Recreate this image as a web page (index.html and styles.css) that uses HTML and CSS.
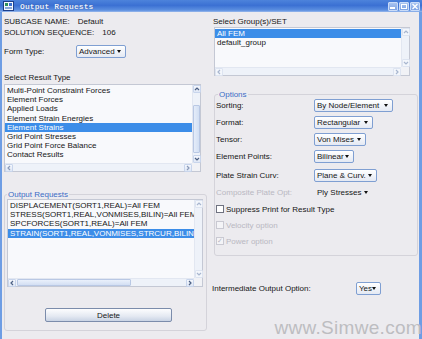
FILE: index.html
```html
<!DOCTYPE html>
<html lang="en">
<head>
  <meta charset="UTF-8">
  <title>Output Requests</title>
  <link rel="stylesheet" href="styles.css">
</head>
<body>
  <div class="window">
    <div class="titlebar">
      <svg class="app-icon" width="11" height="10" viewBox="0 0 11 10">
        <rect x="0.5" y="0.5" width="10" height="9" fill="#f4f8ff" stroke="#1d3f8a"/>
        <rect x="2" y="2" width="3" height="3" fill="#2f8f5a"/>
        <rect x="6" y="2" width="3" height="3" fill="#3a6fd0"/>
        <rect x="2" y="6" width="7" height="2" fill="#8aa8d8"/>
      </svg>
      <span class="title">Output Requests</span>
      <div class="wbtns">
        <span class="wbtn"><svg width="10" height="9" viewBox="0 0 10 9"><rect x="2" y="5" width="5" height="2" fill="#fff"/></svg></span>
        <span class="wbtn"><svg width="10" height="9" viewBox="0 0 10 9"><rect x="2.5" y="2.5" width="5" height="4" fill="none" stroke="#fff"/></svg></span>
        <span class="wbtn"><svg width="10" height="9" viewBox="0 0 10 9"><path d="M2.5 2 L7.5 7 M7.5 2 L2.5 7" stroke="#fff" stroke-width="1.3"/></svg></span>
      </div>
    </div>

    <div class="content">
      <div class="col-left">
        <div class="info"><span>SUBCASE NAME:</span><span class="val">Default</span></div>
        <div class="info"><span>SOLUTION SEQUENCE:</span><span class="val">106</span></div>
        <div class="form-row">
          <span class="form-label">Form Type:</span>
          <span class="select w-adv">Advanced<i class="arrow"></i></span>
        </div>
        <div class="caption">Select Result Type</div>

        <div class="listbox result-list">
          <div class="items">
            <div class="item">Multi-Point Constraint Forces</div>
            <div class="item">Element Forces</div>
            <div class="item">Applied Loads</div>
            <div class="item">Element Strain Energies</div>
            <div class="item selected">Element Strains</div>
            <div class="item">Grid Point Stresses</div>
            <div class="item">Grid Point Force Balance</div>
            <div class="item">Contact Results</div>
          </div>
          <div class="vscroll">
            <span class="sbtn"><svg width="6" height="6" viewBox="0 0 6 6"><path d="M1 4 L3 2 L5 4" fill="none" stroke="#4d6185" stroke-width="1.2"/></svg></span>
            <span class="vtrack"><span class="vthumb"></span></span>
            <span class="sbtn"><svg width="6" height="6" viewBox="0 0 6 6"><path d="M1 2 L3 4 L5 2" fill="none" stroke="#4d6185" stroke-width="1.2"/></svg></span>
          </div>
          <div class="hscroll">
            <span class="sbtn"><svg width="6" height="6" viewBox="0 0 6 6"><path d="M4 1 L2 3 L4 5" fill="none" stroke="#8a9ab8" stroke-width="1.2"/></svg></span>
            <span class="htrack"></span>
            <span class="sbtn"><svg width="6" height="6" viewBox="0 0 6 6"><path d="M2 1 L4 3 L2 5" fill="none" stroke="#8a9ab8" stroke-width="1.2"/></svg></span>
          </div>
          <div class="corner"></div>
        </div>

        <fieldset class="group output-group">
          <legend>Output Requests</legend>
          <div class="listbox output-list">
            <div class="items">
              <div class="item">DISPLACEMENT(SORT1,REAL)=All FEM</div>
              <div class="item">STRESS(SORT1,REAL,VONMISES,BILIN)=All FEM</div>
              <div class="item">SPCFORCES(SORT1,REAL)=All FEM</div>
              <div class="item selected">STRAIN(SORT1,REAL,VONMISES,STRCUR,BILIN)=All FEM</div>
            </div>
            <div class="vscroll">
              <span class="sbtn faint"><svg width="6" height="6" viewBox="0 0 6 6"><path d="M1 4 L3 2 L5 4" fill="none" stroke="#a8b6cf" stroke-width="1.2"/></svg></span>
              <span class="vtrack"></span>
              <span class="sbtn faint"><svg width="6" height="6" viewBox="0 0 6 6"><path d="M1 2 L3 4 L5 2" fill="none" stroke="#a8b6cf" stroke-width="1.2"/></svg></span>
            </div>
            <div class="hscroll">
              <span class="sbtn"><svg width="6" height="6" viewBox="0 0 6 6"><path d="M4 1 L2 3 L4 5" fill="none" stroke="#4d6185" stroke-width="1.2"/></svg></span>
              <span class="htrack"><span class="hthumb"></span></span>
              <span class="sbtn"><svg width="6" height="6" viewBox="0 0 6 6"><path d="M2 1 L4 3 L2 5" fill="none" stroke="#4d6185" stroke-width="1.2"/></svg></span>
            </div>
            <div class="corner"></div>
          </div>
          <button class="delete-btn">Delete</button>
        </fieldset>
      </div>

      <div class="col-right">
        <div class="caption top">Select Group(s)/SET</div>
        <div class="listbox group-list">
          <div class="items">
            <div class="item selected">All FEM</div>
            <div class="item">default_group</div>
          </div>
          <div class="vscroll">
            <span class="sbtn faint"><svg width="6" height="6" viewBox="0 0 6 6"><path d="M1 4 L3 2 L5 4" fill="none" stroke="#a8b6cf" stroke-width="1.2"/></svg></span>
            <span class="vtrack"></span>
            <span class="sbtn faint"><svg width="6" height="6" viewBox="0 0 6 6"><path d="M1 2 L3 4 L5 2" fill="none" stroke="#a8b6cf" stroke-width="1.2"/></svg></span>
          </div>
          <div class="hscroll">
            <span class="sbtn faint"><svg width="6" height="6" viewBox="0 0 6 6"><path d="M4 1 L2 3 L4 5" fill="none" stroke="#a8b6cf" stroke-width="1.2"/></svg></span>
            <span class="htrack"></span>
            <span class="sbtn faint"><svg width="6" height="6" viewBox="0 0 6 6"><path d="M2 1 L4 3 L2 5" fill="none" stroke="#a8b6cf" stroke-width="1.2"/></svg></span>
          </div>
          <div class="corner"></div>
        </div>

        <fieldset class="group options-group">
          <legend>Options</legend>
          <div class="opt-row first"><span class="opt-label">Sorting:</span><span class="select w-sort">By Node/Element<i class="arrow"></i></span></div>
          <div class="opt-row"><span class="opt-label">Format:</span><span class="select w-format">Rectangular<i class="arrow"></i></span></div>
          <div class="opt-row"><span class="opt-label">Tensor:</span><span class="select w-tensor">Von Mises<i class="arrow"></i></span></div>
          <div class="opt-row"><span class="opt-label">Element Points:</span><span class="select w-points">Bilinear<i class="arrow"></i></span></div>
          <div class="opt-row plate"><span class="opt-label">Plate Strain Curv:</span><span class="select w-plate">Plane &amp; Curv.<i class="arrow"></i></span></div>
          <div class="opt-row"><span class="opt-label disabled">Composite Plate Opt:</span><span class="select flat w-comp">Ply Stresses<i class="arrow"></i></span></div>
          <div class="check-row"><span class="box"></span>Suppress Print for Result Type</div>
          <div class="check-row disabled"><span class="box"></span>Velocity option</div>
          <div class="check-row disabled"><span class="box checked">&#10003;</span>Power option</div>
        </fieldset>

        <div class="inter-row">
          <span class="inter-label">Intermediate Output Option:</span>
          <span class="select w-yes">Yes<i class="arrow"></i></span>
        </div>
      </div>
    </div>

    <div class="watermark">www.Simwe.com</div>
  </div>
</body>
</html>
```

FILE: styles.css
```css
body { margin: 0; font-family: "Liberation Sans", Arial, sans-serif; font-size: 8px; color: #161616; }
.window { width: 422px; height: 339px; position: relative; overflow: hidden; display: flex; flex-direction: column; background: #ecebef; }

/* title bar */
.titlebar { height: 12px; display: flex; align-items: center; background: linear-gradient(#4d83db, #3b70d3 45%, #5d90e0 85%, #9ab9ec); }
.app-icon { margin-left: 3px; }
.title { margin-left: 6px; font-family: "Liberation Mono", monospace; font-size: 8px; font-weight: bold; color: #e4eeff; letter-spacing: 0.1px; text-shadow: 0 0 1px #1c3f8f; }
.wbtns { margin-left: auto; margin-right: 2px; display: flex; gap: 1px; }
.wbtn { width: 10px; height: 9px; display: flex; background: linear-gradient(#a9c4f0, #7ea3e3); border: 1px solid #c9dbf8; border-radius: 1px; box-sizing: border-box; }
.wbtn svg { margin: -1px; }

/* main area */
.content { flex: 1; display: flex; border-left: 2px solid #6e9de4; border-right: 3px solid #6e9de4; }
.col-left { width: 203px; padding-left: 2px; }
.col-right { flex: 1; margin-left: 6px; }

.info { height: 11px; line-height: 11px; }
.info:first-child { margin-top: 4px; }
.info .val { margin-left: 8px; }
.form-row { margin-top: 7px; height: 13px; display: flex; align-items: center; }
.form-label { width: 72px; }
.caption { margin-top: 14px; height: 11px; line-height: 11px; }
.caption.top { margin-top: 4px; }

/* dropdowns */
.select { height: 13px; box-sizing: border-box; display: inline-flex; align-items: center; padding-left: 2px; border: 1px solid #7f9fd2; border-radius: 2px; background: linear-gradient(#ffffff, #e4e9f3); position: relative; white-space: nowrap; }
.select .arrow { position: absolute; right: 4px; top: 4px; width: 0; height: 0; border-left: 2.5px solid transparent; border-right: 2.5px solid transparent; border-top: 3px solid #111; }
.select.flat { border-color: transparent; background: none; }
.w-adv { width: 50px; }
.w-sort { width: 79px; }
.w-format { width: 59px; }
.w-tensor { width: 52px; }
.w-points { width: 40px; }
.w-plate { width: 63px; }
.w-comp { width: 59px; }
.w-yes { width: 25px; }

/* list boxes */
.listbox { box-sizing: border-box; border: 1px solid #c4c8d4; background: #f8f9fc; display: grid; grid-template-columns: 1fr 8px; grid-template-rows: 1fr 8px; }
.items { overflow: hidden; padding-top: 1px; }
.item { height: 9.2px; line-height: 9.2px; padding-left: 2px; white-space: nowrap; }
.item.selected { background: #3c8de8; color: #fff; }
.vscroll { display: flex; flex-direction: column; background: #eef2f9; border-left: 1px solid #e2e7f1; }
.hscroll { display: flex; background: #eef2f9; border-top: 1px solid #e2e7f1; }
.corner { background: #f1f2f6; }
.sbtn { width: 8px; height: 8px; flex: none; display: flex; align-items: center; justify-content: center; box-sizing: border-box; border: 1px solid #c8d5ec; background: linear-gradient(#f4f7fd, #dfe7f5); border-radius: 1px; }
.sbtn.faint { border-color: #dde4f1; background: #f3f6fb; }
.vtrack { flex: 1; position: relative; }
.vthumb { position: absolute; left: 0; right: 0; top: 12px; bottom: 2px; border: 1px solid #b9c8e4; background: linear-gradient(90deg, #e4ecf9, #d2dff3); border-radius: 1px; }
.htrack { flex: 1; position: relative; }
.hthumb { position: absolute; top: 0; bottom: 0; left: 1px; width: 114px; border: 1px solid #b9c8e4; background: linear-gradient(#eaf0fb, #d3dff3); border-radius: 1px; box-sizing: border-box; }

.result-list { margin-top: 1px; width: 197px; height: 88px; }
.output-list { margin-left: 2px; width: 196px; height: 88px; }
.output-list .item { height: 9px; line-height: 9px; }
.output-list .item.selected { margin-top: 1px; }
.group-list { margin-left: 1px; width: 196px; height: 49px; }

/* group boxes */
.group { margin: 0; padding: 0; border: 1px solid #d4d3da; border-radius: 3px; min-width: 0; box-sizing: border-box; }
.group legend { padding: 0 1px; margin-left: 2px; height: 9px; line-height: 9px; color: #3b6bc6; }
.output-group { margin-top: 18px; width: 203px; padding-bottom: 8px; }
.delete-btn { display: block; margin: 21px 0 0 40px; width: 127px; height: 14px; padding: 0; font-family: inherit; font-size: 8px; color: #161616; border: 1px solid #7b8cab; border-radius: 2px; background: linear-gradient(#fdfdfe, #e4e9f2 60%, #c9d3e4); }

.options-group { margin: 14px 0 0 1px; width: 204px; padding: 0 0 6px 1px; }
.opt-row { height: 17px; display: flex; align-items: center; }
.opt-row.first { margin-top: -2px; }
.opt-row.plate { margin-top: 2px; }
.opt-label { width: 98px; }
.disabled { color: #b9b8c2; }
.check-row { height: 16px; display: flex; align-items: center; }
.box { width: 8px; height: 8px; box-sizing: border-box; margin-right: 2px; border: 1px solid #6f7280; background: #fff; display: inline-flex; align-items: center; justify-content: center; font-size: 7px; color: #b9b8c2; }
.check-row.disabled .box { border-color: #c9c9d2; background: #f4f4f7; }

.inter-row { margin: 26px 0 0 -1px; height: 13px; display: flex; align-items: center; }
.inter-label { width: 144px; }

.watermark { position: absolute; right: 0; bottom: 0; font-size: 19px; color: #bdbdc1; letter-spacing: 0.3px; }
```
